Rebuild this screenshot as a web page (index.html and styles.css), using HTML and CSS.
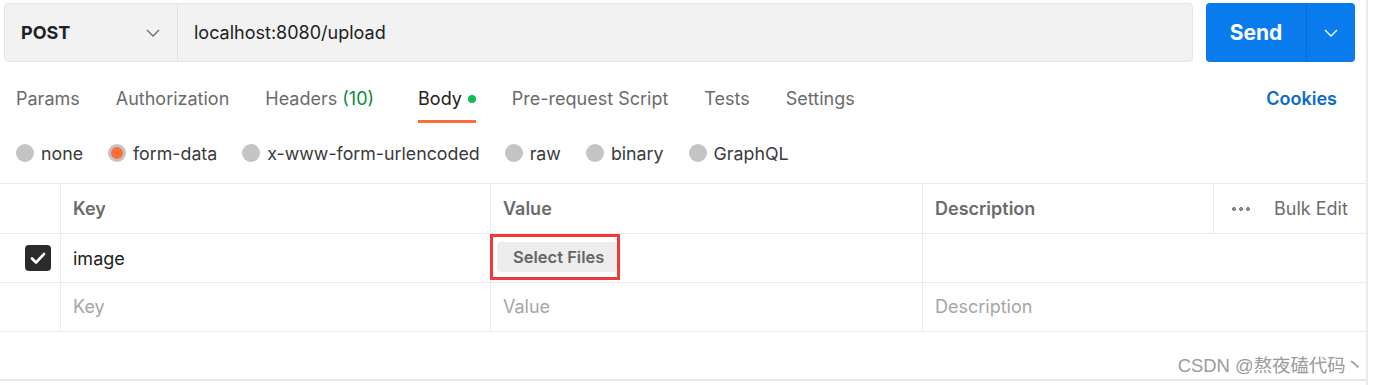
FILE: index.html
```html
<!DOCTYPE html>
<html lang="en">
<head>
    <meta charset="UTF-8">
    <title>Postman - upload</title>
    <link rel="stylesheet" href="styles.css">
</head>
<body>
    <div class="panel">
        <div class="url-bar">
            <div class="request">
                <div class="method">
                    <span>POST</span>
                    <svg class="chevron" width="14" height="8" viewBox="0 0 14 8"><path d="M1 1l6 6 6-6" fill="none" stroke="#6b6b6b" stroke-width="1.3"/></svg>
                </div>
                <div class="url">localhost:8080/upload</div>
            </div>
            <div class="send">
                <span class="send-label">Send</span>
                <span class="send-more">
                    <svg width="14" height="8" viewBox="0 0 14 8"><path d="M1 1l6 6 6-6" fill="none" stroke="#fff" stroke-width="1.3"/></svg>
                </span>
            </div>
        </div>

        <nav class="tabs">
            <a class="tab">Params</a>
            <a class="tab">Authorization</a>
            <a class="tab headers">Headers <span class="count">(10)</span></a>
            <a class="tab active">Body <span class="dot"></span></a>
            <a class="tab">Pre-request Script</a>
            <a class="tab">Tests</a>
            <a class="tab">Settings</a>
            <a class="cookies">Cookies</a>
        </nav>

        <div class="body-types">
            <label class="option"><span class="radio"></span>none</label>
            <label class="option"><span class="radio checked"></span>form-data</label>
            <label class="option"><span class="radio"></span>x-www-form-urlencoded</label>
            <label class="option"><span class="radio"></span>raw</label>
            <label class="option"><span class="radio"></span>binary</label>
            <label class="option"><span class="radio"></span>GraphQL</label>
        </div>

        <div class="params">
            <div class="row head">
                <div class="cell check"></div>
                <div class="cell">Key</div>
                <div class="cell">Value</div>
                <div class="cell">Description</div>
                <div class="cell bulk">
                    <span class="more"><i></i><i></i><i></i></span>
                    <span>Bulk Edit</span>
                </div>
            </div>
            <div class="row">
                <div class="cell check">
                    <span class="checkbox">
                        <svg width="16" height="13" viewBox="0 0 16 13"><path d="M2 6.5l4 4 8-8.5" fill="none" stroke="#fff" stroke-width="2.6" stroke-linecap="round" stroke-linejoin="round"/></svg>
                    </span>
                </div>
                <div class="cell text">image</div>
                <div class="cell file">
                    <span class="highlight"><span class="select-files">Select Files</span></span>
                </div>
                <div class="cell wide"></div>
            </div>
            <div class="row">
                <div class="cell check"></div>
                <div class="cell placeholder">Key</div>
                <div class="cell placeholder">Value</div>
                <div class="cell wide placeholder">Description</div>
            </div>
        </div>

        <div class="footer">
            <span class="watermark">CSDN @熬夜磕代码丶</span>
        </div>
    </div>
</body>
</html>
```

FILE: styles.css
```css
body {
    margin: 0;
    background: #fff;
    font-family: 'Inter', 'Noto Sans', sans-serif;
    font-size: 18px;
    color: #212121;
}

.panel {
    width: 1368px;
    border-right: 2px solid #ebebeb;
    box-sizing: border-box;
    height: 385px;
}

/* url bar */
.url-bar {
    display: flex;
    gap: 13px;
    padding: 3px 11px 0 4px;
}

.request {
    flex: 1;
    display: flex;
    height: 59px;
    box-sizing: border-box;
    background: #f2f2f2;
    border: 1px solid #e6e6e6;
    border-radius: 4px;
}

.method {
    width: 173px;
    box-sizing: border-box;
    display: flex;
    align-items: center;
    justify-content: space-between;
    padding: 0 17px 0 16px;
    border-right: 1px solid #e0e0e0;
    font-weight: 700;
}

.url {
    display: flex;
    align-items: center;
    padding-left: 16px;
}

.send {
    width: 149px;
    height: 59px;
    display: flex;
    background: #097bed;
    border-radius: 4px;
    color: #fff;
}

.send-label {
    flex: 1;
    display: flex;
    align-items: center;
    justify-content: center;
    font-weight: 700;
    font-size: 21px;
    border-right: 1px solid #0a6fd3;
}

.send-more {
    width: 48px;
    display: flex;
    align-items: center;
    justify-content: center;
}

/* tabs */
.tabs {
    display: flex;
    align-items: flex-end;
    padding: 25px 29px 0 16px;
    height: 61px;
    box-sizing: border-box;
}

.tab {
    display: flex;
    align-items: center;
    gap: 6px;
    margin-right: 36px;
    line-height: 24px;
    padding-bottom: 9px;
    border-bottom: 3px solid transparent;
    color: #6b6b6b;
}

.tab.headers {
    margin-right: 44px;
}

.tab .count {
    color: #0a8a3d;
    margin-left: -1px;
}

.tab.active {
    color: #212121;
    border-bottom-color: #ff6c37;
}

.dot {
    width: 8px;
    height: 8px;
    border-radius: 50%;
    background: #0cbb52;
}

.cookies {
    margin-left: auto;
    align-self: flex-start;
    line-height: 24px;
    color: #0b6bcb;
    font-weight: 600;
}

/* body type radios */
.body-types {
    display: flex;
    align-items: center;
    height: 60px;
    padding-left: 16px;
    gap: 25px;
    font-size: 17.8px;
}

.option {
    display: flex;
    align-items: center;
    gap: 7px;
    color: #3a3a3a;
}

.radio {
    width: 18px;
    height: 18px;
    box-sizing: border-box;
    border-radius: 50%;
    background: #c4c4c4;
}

.radio.checked {
    background: #ff6c37;
    border: 3px solid #c4c4c4;
}

/* params table */
.params {
    border-top: 1px solid #ebebeb;
}

.row {
    display: grid;
    grid-template-columns: 60px 430px 432px 291px 1fr;
    height: 49px;
    border-bottom: 1px solid #ebebeb;
    box-sizing: border-box;
}

.row.head {
    height: 50px;
}

.cell {
    display: flex;
    align-items: center;
    padding-left: 12px;
    border-left: 1px solid #ebebeb;
    color: #6b6b6b;
}

.row.head .cell {
    font-weight: 600;
}

.cell.check {
    border-left: none;
    justify-content: center;
    padding-left: 16px;
}

.cell.wide {
    grid-column: span 2;
}

.cell.text {
    color: #212121;
    padding-left: 12px;
}

.cell.placeholder {
    color: #a6a6a6;
    padding-bottom: 2px;
}

.row.head .cell.bulk {
    font-weight: 400;
    padding-left: 18px;
    gap: 24px;
}

.more {
    display: flex;
    gap: 3px;
}

.more i {
    width: 4px;
    height: 4px;
    border-radius: 50%;
    border: 1px solid #6b6b6b;
    box-sizing: border-box;
    background: #9a9a9a;
}

.checkbox {
    width: 26px;
    height: 26px;
    border-radius: 4px;
    background: #2b2b2b;
    display: flex;
    align-items: center;
    justify-content: center;
}

.cell.file {
    padding-left: 0;
    align-items: flex-start;
}

.highlight {
    display: flex;
    align-items: center;
    height: 46px;
    margin-left: -1px;
    box-sizing: border-box;
    border: 3px solid #f03a3a;
    padding: 0 0 0 4px;
    white-space: nowrap;
}

.select-files {
    background: #ededed;
    border-radius: 4px;
    padding: 0 13px 0 16px;
    line-height: 30px;
    font-weight: 600;
    font-size: 16.5px;
    color: #666;
}

/* footer */
.footer {
    height: 47px;
    border-bottom: 2px solid #e6e6e6;
    display: flex;
    align-items: flex-end;
    justify-content: flex-end;
    padding-right: 2px;
}

.watermark {
    font-family: 'Liberation Sans', 'Noto Sans CJK SC', sans-serif;
    font-size: 18.4px;
    color: #9a9a9a;
    line-height: 22px;
    padding-bottom: 2px;
}
```
